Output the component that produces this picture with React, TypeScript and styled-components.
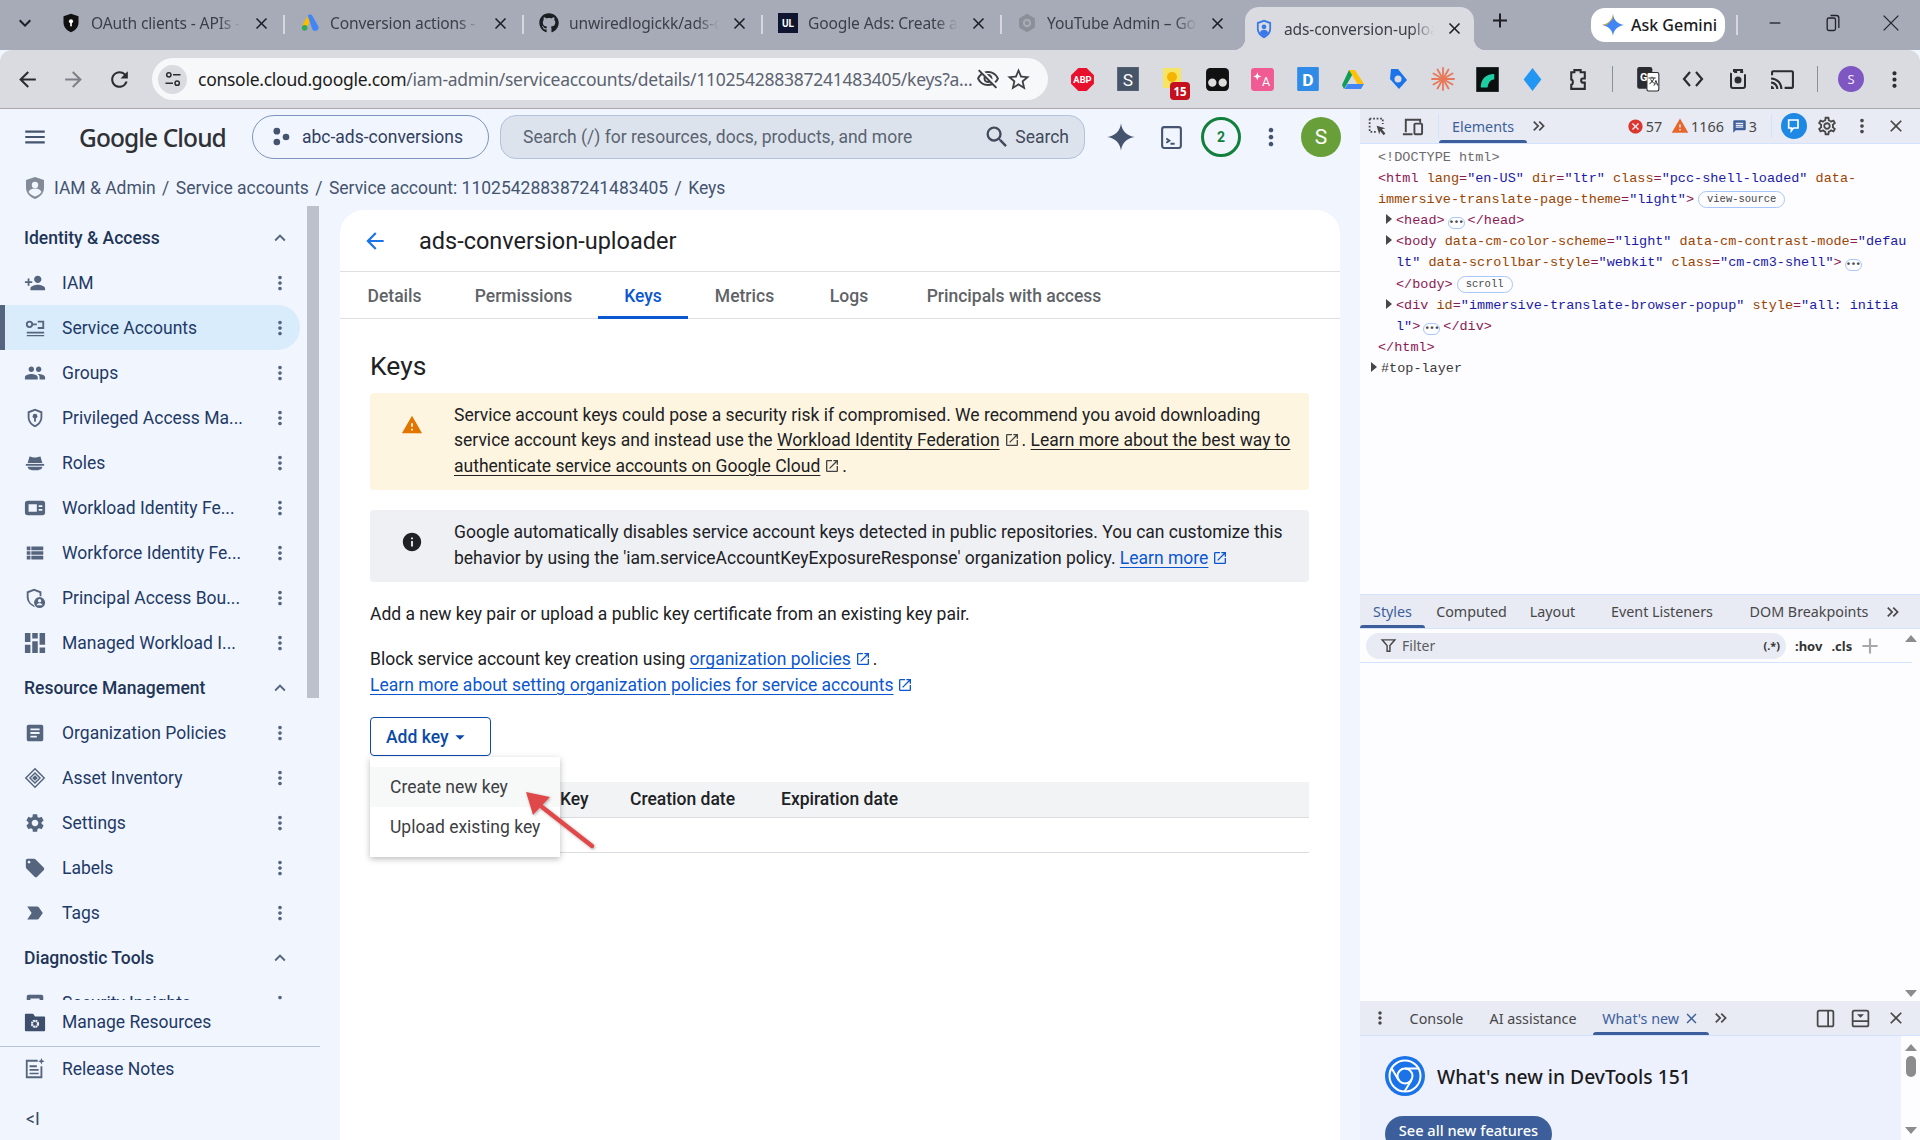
import React from "react";
import styled, { createGlobalStyle } from "styled-components";
import {
  MdPersonAdd, MdPeople, MdViewList, MdArticle, MdSettings, MdLocalOffer, MdLabelImportant,
  MdMoreVert, MdExpandLess, MdMenu, MdSearch, MdArrowBack, MdArrowForward, MdKeyboardArrowDown, MdClose, MdAdd,
  MdOutlineStarBorder, MdOutlineVisibilityOff, MdRefresh, MdInfo, MdWarning, MdOpenInNew, MdOutlineCast,
  MdArrowDropDown, MdFilterAlt, MdKeyboardDoubleArrowRight, MdOutlineSettings, MdCancel, MdMessage, MdOutlineTranslate,
} from "react-icons/md";
import { FaGithub } from "react-icons/fa";

const UI = `"Noto Sans", Roboto, sans-serif`;
const G = `Roboto, "Noto Sans", sans-serif`;
const MONO = `"Liberation Mono", monospace`;

const Global = createGlobalStyle`
  html, body { margin: 0; padding: 0; width: 1920px; height: 1140px; overflow: hidden; }
  #root { width: 1920px; height: 1140px; }
  * { box-sizing: border-box; }
`;

const Screen = styled.div`width:1920px;height:1140px;display:flex;flex-direction:column;background:#f1f5fe;overflow:hidden;`;

/* ---------- browser chrome ---------- */
const TabStrip = styled.div`height:50px;background:#a7abb8;display:flex;align-items:flex-end;flex:none;`;
const TabChevron = styled.div`width:46px;height:50px;display:flex;align-items:center;justify-content:center;padding-left:4px;color:#1d1f24;font-size:24px;padding-bottom:4px;`;
const Tab = styled.div<{ $active?: boolean; $sep?: boolean }>`
  position:relative;height:${p => (p.$active ? 43 : 50)}px;width:${p => (p.$active ? 229 : 239)}px;
  margin-left:${p => (p.$active ? 4 : 0)}px;
  display:flex;align-items:center;
  padding-left:${p => (p.$active ? 9 : 15)}px;
  padding-bottom:${p => (p.$active ? 0 : 4)}px;
  background:${p => (p.$active ? "#d9dbe0" : "transparent")};
  border-radius:${p => (p.$active ? "14px 14px 0 0" : "0")};
  ${p => p.$sep ? `&::after{content:"";position:absolute;right:0;top:15px;width:2px;height:19px;background:#d6d8dd;}` : ""}
  ${p => p.$active ? `
    &::before{content:"";position:absolute;left:-12px;bottom:0;width:12px;height:12px;background:radial-gradient(circle at 0 0,transparent 12px,#d9dbe0 12.5px);}
    &::after{content:"";position:absolute;right:-12px;bottom:0;width:12px;height:12px;background:radial-gradient(circle at 100% 0,transparent 12px,#d9dbe0 12.5px);}
  ` : ""}
`;
const Favicon = styled.span`width:20px;height:20px;flex:none;display:flex;align-items:center;justify-content:center;`;
const TabTitle = styled.span<{ $active?: boolean }>`
  width:150px;margin-left:${p => (p.$active ? 10 : 10)}px;white-space:nowrap;overflow:hidden;
  font:${UI};font-family:${UI};font-size:15.6px;letter-spacing:-.15px;color:#3c3f47;
  -webkit-mask-image:linear-gradient(90deg,#000 85%,transparent 100%);mask-image:linear-gradient(90deg,#000 85%,transparent 100%);
`;
const TabClose = styled.span`width:24px;margin-left:8px;flex:none;display:flex;justify-content:center;color:#1d1f24;font-size:19px;`;
const Plus = styled.span`margin-left:14px;width:24px;display:flex;justify-content:center;color:#1d1f24;font-size:25px;padding-bottom:9px;height:50px;align-items:center;`;
const Gemini = styled.div`
  margin-left:auto;height:34px;width:134px;border-radius:14px;background:#fff;margin-bottom:8px;
  display:flex;align-items:center;gap:6px;padding-left:10px;font-family:${UI};font-size:16px;font-weight:500;color:#1b1c20;
`;
const WinSep = styled.span`width:2px;height:20px;background:#d6d8dd;margin:0 0 15px 11px;`;
const WinBtns = styled.div`display:flex;height:50px;width:182px;align-items:center;padding-left:26px;padding-bottom:4px;gap:36px;color:#22242a;`;
const WinBtn = styled.span`width:22px;height:22px;display:flex;align-items:center;justify-content:center;`;

const Toolbar = styled.div`height:58px;background:#d9dbe0;border-radius:12px 12px 0 0;display:flex;align-items:center;flex:none;`;
const NavIcon = styled.span<{ $dim?: boolean }>`width:46px;display:flex;justify-content:center;font-size:25px;color:${p => (p.$dim ? "#7d8087" : "#2a2c31")};`;
const NavIcons = styled.div`display:flex;width:142px;padding-left:5px;`;
const AddressBar = styled.div`width:896px;height:42px;background:#f7f8fa;border-radius:21px;display:flex;align-items:center;padding:0 14px 0 6px;flex:none;margin-left:10px;`;
const SiteInfo = styled.span`width:29px;height:29px;border-radius:50%;background:#d9dbe0;flex:none;display:flex;align-items:center;justify-content:center;`;
const Url = styled.span`margin-left:11px;font-family:${UI};font-size:17.5px;letter-spacing:-.27px;color:#5c6371;white-space:nowrap;flex:1;`;
const UrlHost = styled.b`font-weight:400;color:#1b1c20;`;
const BarIcon = styled.span`width:40px;display:flex;justify-content:center;font-size:24px;color:#3e4045;`;
const Ext = styled.span<{ $w?: number }>`position:relative;width:${p => p.$w ?? 45}px;height:28px;flex:none;display:flex;align-items:center;justify-content:center;`;
const ExtRow = styled.div`display:flex;margin-left:12px;align-items:center;`;
const ExtSep = styled.span`width:1px;height:26px;background:#8a9099;margin:0 12px 0 12px;flex:none;`;
const Badge = styled.span`position:absolute;right:5px;bottom:-7px;width:20px;height:18px;border-radius:4px;background:#c5101f;color:#fff;font-family:${UI};font-size:11.5px;font-weight:700;display:flex;align-items:center;justify-content:center;`;
const Avatar = styled.span`width:26px;height:26px;border-radius:50%;background:#7e57c2;color:#f0e8ff;font-family:${UI};font-size:13px;display:flex;align-items:center;justify-content:center;`;
const ChromeEdge = styled.div`height:1px;background:#a8aaae;flex:none;`;

/* ---------- layout ---------- */
const Split = styled.div`flex:1;display:flex;min-height:0;`;
const LeftPane = styled.div`width:1360px;flex:none;display:flex;flex-direction:column;min-height:0;`;

const GNav = styled.div`height:56px;flex:none;display:flex;align-items:center;padding-left:24px;`;
const Logo = styled.span`margin-left:31px;font-family:${UI};font-size:24.5px;letter-spacing:-.9px;color:#2e3135;width:173px;font-weight:500;`;
const ProjectPill = styled.div`
  width:237px;height:44px;border:1px solid #7f94bd;border-radius:22px;display:flex;align-items:center;padding-left:18px;gap:11px;
  font-family:${G};font-size:17.5px;color:#30405f;flex:none;
`;
const SearchBox = styled.div`
  margin-left:11px;width:585px;height:44px;border:1px solid #b3c2dd;border-radius:16px;background:#dde3ec;display:flex;align-items:center;padding:0 15px 0 22px;
  font-family:${G};font-size:17.5px;color:#5a6372;flex:none;
`;
const SearchHint = styled.span`flex:1;`;
const SearchAct = styled.span`display:flex;align-items:center;gap:4px;color:#3f4a5c;`;
const HeadIcon = styled.span`width:50px;display:flex;justify-content:center;align-items:center;color:#44546f;flex:none;`;
const Credit = styled.span`width:40px;height:40px;border-radius:50%;border:3px solid #12803c;color:#12803c;font-family:${G};font-size:14px;font-weight:700;display:flex;align-items:center;justify-content:center;`;
const UserAvatar = styled.span`width:40px;height:40px;border-radius:50%;background:#689f38;color:#fff;font-family:${G};font-size:21px;display:flex;align-items:center;justify-content:center;`;

const Crumbs = styled.div`height:41px;flex:none;display:flex;align-items:center;padding:5px 0 0 25px;font-family:${G};font-size:17.5px;color:#44546f;`;
const CrumbSep = styled.span`width:12px;text-align:center;margin:0 3px;`;
const Crumb = styled.span`margin:0 1px;`;

const Body = styled.div`flex:1;display:flex;min-height:0;`;
const Sidebar = styled.aside`width:340px;flex:none;display:flex;flex-direction:column;`;
const NavArea = styled.div`height:794px;flex:none;display:flex;overflow:hidden;`;
const NavList = styled.div`width:300px;flex:none;padding-top:9px;`;
const Thumb = styled.div`width:12px;height:492px;margin-left:7px;background:#bcc1cc;flex:none;`;
const Section = styled.div`height:45px;display:flex;align-items:center;padding-left:24px;font-family:${G};font-size:17.5px;font-weight:500;color:#1e3557;`;
const SectionName = styled.span`flex:1;`;
const Row = styled.div<{ $active?: boolean }>`
  height:45px;display:flex;align-items:center;padding-left:24px;font-family:${G};font-size:17.5px;color:#1e3a66;white-space:nowrap;
  background:${p => (p.$active ? "#d9ecfc" : "transparent")};
  border-radius:${p => (p.$active ? "0 22px 22px 0" : "0")};
  border-left:${p => (p.$active ? "5px solid #56657e" : "0")};
  ${p => p.$active ? "padding-left:19px;" : ""}
`;
const RowIcon = styled.span`width:22px;height:22px;flex:none;display:flex;align-items:center;justify-content:center;color:#56657e;font-size:22px;`;
const RowLabel = styled.span`margin-left:16px;flex:1;`;
const RowEnd = styled.span`width:24px;margin-right:8px;display:flex;justify-content:center;color:#56657e;font-size:22px;`;
const SideFoot = styled.div`flex:1;display:flex;flex-direction:column;`;
const FootRow = styled(Row)`height:44px;`;
const FootDivider = styled.div`width:320px;height:1px;background:#b7c3dc;margin:2px 0 0;`;
const Collapse = styled.div`margin-top:6px;padding-left:26px;height:44px;display:flex;align-items:center;color:#3b4a63;font-family:${G};font-size:17.5px;`;

const Card = styled.main`width:1000px;margin-top:4px;background:#fff;border-radius:24px 24px 0 0;flex:none;display:flex;flex-direction:column;`;
const CardHead = styled.div`height:62px;border-bottom:1px solid #e0e0e0;flex:none;display:flex;align-items:center;padding-left:22px;`;
const CardTitle = styled.h1`margin:0 0 0 31px;font-family:${G};font-weight:400;font-size:23.5px;color:#202124;`;
const Tabs = styled.nav`height:47px;border-bottom:1px solid #e0e0e0;flex:none;display:flex;padding-left:0;`;
const TabLink = styled.span<{ $on?: boolean; $w: number }>`
  height:47px;width:${p => p.$w}px;display:flex;align-items:center;justify-content:center;font-family:${G};font-size:17.5px;font-weight:500;
  color:${p => (p.$on ? "#0b57d0" : "#5f6368")};
  border-bottom:${p => (p.$on ? "3px solid #0b57d0" : "0")};
  padding-top:${p => (p.$on ? 3 : 0)}px;
`;
const Content = styled.div`padding:30px 31px 0 30px;font-family:${G};font-size:17.5px;color:#202124;line-height:25.4px;`;
const H2 = styled.h2`margin:0 0 10px;font-family:${G};font-weight:400;font-size:26.5px;line-height:34px;color:#202124;`;
const Notice = styled.div<{ $warn?: boolean }>`
  display:flex;background:${p => (p.$warn ? "#fef5e0" : "#eef0f4")};border-radius:4px;padding:10px 0 11px;
  margin-bottom:20px;
`;
const NoticeIcon = styled.span`width:84px;flex:none;display:flex;justify-content:center;padding-top:11px;font-size:22px;`;
const NoticeText = styled.div`flex:1;white-space:nowrap;`;
const Under = styled.a<{ $blue?: boolean }>`color:${p => (p.$blue ? "#0b57d0" : "#202124")};text-decoration:underline;text-underline-offset:3px;`;
const Ext2 = styled.span<{ $blue?: boolean }>`display:inline-flex;vertical-align:-2px;margin:0 2px 0 4px;font-size:16px;color:${p => (p.$blue ? "#0b57d0" : "#444")};`;
const Para = styled.p`margin:0 0 20px;white-space:nowrap;`;
const ActionWrap = styled.div`position:relative;height:39px;margin-top:-1px;`;
const AddKey = styled.button`
  width:121px;height:39px;background:#fff;border:1px solid #0b4aa8;border-radius:4px;font-family:${G};font-size:17.5px;font-weight:500;color:#0b4aa8;
  display:flex;align-items:center;padding:0 0 0 15px;
`;
const Menu = styled.div`position:absolute;left:0;top:40px;width:190px;height:100px;background:#fff;box-shadow:0 2px 6px rgba(60,64,67,.35);padding-top:10px;z-index:2;`;
const MenuItem = styled.div<{ $hi?: boolean }>`height:40px;padding-left:20px;display:flex;align-items:center;background:${p => (p.$hi ? "#f7f8f8" : "#fff")};color:#3c4043;`;
const Arrow = styled.svg`position:absolute;left:150px;top:70px;z-index:3;`;
const Table = styled.div`margin-top:26px;`;
const THead = styled.div`height:36px;background:#f1f3f4;border-bottom:1px solid #dadce0;display:flex;align-items:center;font-weight:500;padding-left:190px;color:#202124;`;
const Th = styled.span<{ $w: number }>`width:${p => p.$w}px;`;
const TRow = styled.div`height:35px;border-bottom:1px solid #dadce0;`;

/* ---------- devtools ---------- */
const Dev = styled.aside`width:560px;flex:none;display:flex;flex-direction:column;background:#fdfcff;font-family:${UI};min-height:0;`;
const DevBar = styled.div<{ $h?: number }>`height:${p => p.$h ?? 35}px;background:#e8eaf4;flex:none;display:flex;align-items:center;border-bottom:1px solid #d3e3fd;color:#474747;font-size:14.3px;`;
const DevTab = styled.span<{ $on?: boolean; $w: number }>`
  width:${p => p.$w}px;height:100%;display:flex;align-items:center;justify-content:center;flex:none;position:relative;
  color:${p => (p.$on ? "#3c5f9b" : "#474747")};
  ${p => p.$on ? `&::after{content:"";position:absolute;left:0;right:0;bottom:0;height:3px;background:#3c5f9b;border-radius:3px 3px 0 0;}` : ""}
`;
const DevIcon = styled.span<{ $w?: number }>`width:${p => p.$w ?? 35}px;flex:none;display:flex;align-items:center;justify-content:center;color:#474747;`;
const DevDivider = styled.span`width:1px;height:24px;background:#d3e3fd;flex:none;`;
const Count = styled.span`display:flex;align-items:center;gap:2px;flex:none;font-size:14.3px;`;
const Elements = styled.div`height:451px;flex:none;padding-top:3px;font-family:${MONO};font-size:13.5px;line-height:21.1px;border-bottom:1px solid #d3e3fd;white-space:nowrap;color:#3a3a3a;`;
const Line = styled.div<{ $x: number }>`padding-left:${p => p.$x}px;height:21.1px;position:relative;`;
const Tri = styled.i`position:absolute;display:block;width:0;height:0;border-left:6px solid #474747;border-top:5px solid transparent;border-bottom:5px solid transparent;margin:4px 0 0 -10px;`;
const T = styled.span`color:#8b1a53;`;
const A = styled.span`color:#994500;`;
const V = styled.span`color:#1a1aa6;`;
const Gr = styled.span`color:#6b6b6b;`;
const Pill = styled.span`display:inline-block;border:1px solid #a8c7fa;border-radius:9px;font-size:10.5px;line-height:15px;height:17px;padding:0 8px;margin:0 0 0 4px;color:#474747;vertical-align:1px;`;
const Dots = styled.span`display:inline-flex;align-items:center;justify-content:center;width:17px;height:12px;border:1px solid #a8c7fa;border-radius:6px;margin:0 3px;font-size:9px;letter-spacing:-.5px;color:#474747;font-weight:700;line-height:6px;vertical-align:-1px;`;
const FilterRow = styled.div`height:34px;flex:none;display:flex;align-items:center;border-bottom:1px solid #d3e3fd;width:552px;padding-left:6px;font-size:14px;color:#474747;`;
const FilterBox = styled.div`width:420px;height:26px;border-radius:13px;background:#e8eaf4;display:flex;align-items:center;padding:0 6px 0 14px;gap:5px;`;
const FilterText = styled.span`flex:1;color:#5c5c5c;`;
const Hov = styled.span`font-weight:700;font-size:13px;margin-left:9px;font-family:${UI};color:#333;`;
const StylesPane = styled.div`height:338px;flex:none;position:relative;`;
const Scroller = styled.div`position:absolute;right:0;top:0;bottom:0;width:19px;display:flex;flex-direction:column;align-items:center;justify-content:space-between;color:#8c8c8c;padding:0 0 4px;`;
const UpTri = styled.i`display:block;width:0;height:0;border-left:6px solid transparent;border-right:6px solid transparent;border-bottom:7px solid #8c8c8c;`;
const DownTri = styled.i`display:block;width:0;height:0;border-left:6px solid transparent;border-right:6px solid transparent;border-top:7px solid #8c8c8c;`;
const DrawerBody = styled.div`flex:1;background:#edf0fd;position:relative;padding:20px 0 0 25px;overflow:hidden;`;
const NewsHead = styled.div`display:flex;align-items:center;gap:12px;font-size:19.3px;font-weight:500;color:#1b1c20;height:40px;`;
const SeeAll = styled.div`margin-top:20px;width:167px;height:36px;border-radius:18px;background:#3c5f9b;color:#fff;font-size:14.6px;font-weight:500;display:flex;justify-content:center;padding-top:4px;`;
const DrawerScroll = styled.div`position:absolute;right:0;top:0;bottom:0;width:19px;background:#fdfcff;display:flex;flex-direction:column;align-items:center;padding:8px 0 0;`;
const DrawerThumb = styled.i`display:block;width:10px;height:21px;border-radius:5px;background:#8c8c8c;margin-top:5px;`;
const Spacer = styled.span`flex:1;`;

/* ---------- drawn icons ---------- */
const Svg: React.FC<{ s?: number; v?: string; children: React.ReactNode; style?: React.CSSProperties }> = ({ s = 22, v = "0 0 24 24", children, style }) => (
  <svg width={s} height={s} viewBox={v} style={style}>{children}</svg>
);
const Star4 = "M12 1C12.6 7 17 11.4 23 12C17 12.6 12.6 17 12 23C11.4 17 7 12.6 1 12C7 11.4 11.4 7 12 1Z";

const ShieldFav = () => <Svg s={20}><path fill="#111" d="M12 1l9 3v7c0 6-4 10-9 12-5-2-9-6-9-12V4z" /><circle cx="12" cy="10" r="2.5" fill="#fff" /><rect x="11" y="11" width="2" height="5" fill="#fff" /></Svg>;
const AdsFav = () => <Svg s={22}><path fill="#fbbc04" d="M9 4l5 2.8-6 10.4L3 14.4z" /><path fill="#4285f4" d="M9.2 3.4c1.4-2.4 4.4-2 5.6 0l7 12.2c1.2 2.2.4 4.4-1.6 5.4-2 1-4.2.4-5.4-1.6z" /><circle cx="5.6" cy="17.8" r="3.4" fill="#34a853" /></Svg>;
const UlFav = () => <Svg s={20}><rect width="24" height="24" fill="#0f1430" /><text x="12" y="16.5" fontSize="12" fontWeight="700" fontFamily="Roboto, sans-serif" fill="#fff" textAnchor="middle">UL</text></Svg>;
const HexFav = () => <Svg s={20}><path fill="#8b8f98" d="M12 1l9.5 5.5v11L12 23l-9.5-5.5v-11z" /><circle cx="12" cy="12" r="5" fill="#a7abb8" /><circle cx="12" cy="12" r="2.4" fill="#8b8f98" /></Svg>;
const ActiveFav = () => <Svg s={22}><path fill="#3b78e7" d="M12 1l8.5 3v7.5c0 5.5-3.6 9.5-8.5 11.5-4.9-2-8.5-6-8.5-11.5V4z" /><path fill="#d9dbe0" d="M12 3.4l6.4 2.3v5.8c0 4.3-2.7 7.3-6.4 9-3.7-1.7-6.4-4.7-6.4-9V5.7z" /><circle cx="12" cy="9.4" r="2.8" fill="#3b78e7" /><path fill="#3b78e7" d="M7 17c.6-2.8 2.6-4 5-4s4.4 1.2 5 4c-1.4 1.6-3 2.8-5 3.6-2-.8-3.6-2-5-3.6z" /></Svg>;

const GeminiStar = ({ s = 22 }: { s?: number }) => (
  <Svg s={s}>
    <defs><linearGradient id="gem" x1="0" y1="0" x2="1" y2="1"><stop offset="0" stopColor="#ea4335" /><stop offset=".35" stopColor="#4285f4" /><stop offset=".65" stopColor="#4285f4" /><stop offset="1" stopColor="#34a853" /></linearGradient></defs>
    <path d={Star4} fill="url(#gem)" />
    <path d="M12 1C11.4 7 7 11.4 1 12L6 12 12 6z" fill="#f4b400" opacity=".75" />
  </Svg>
);
const Burst = () => <Svg s={24}><g stroke="#e8785a" strokeWidth="1.8" strokeLinecap="round">{[0, 30, 60, 90, 120, 150, 180, 210, 240, 270, 300, 330].map(a => <line key={a} x1="12" y1="12" x2={12 + 11 * Math.cos(a * Math.PI / 180)} y2={12 + 11 * Math.sin(a * Math.PI / 180)} />)}</g></Svg>;

const svcIcon = <Svg><circle cx="6" cy="8" r="3" fill="none" stroke="currentColor" strokeWidth="2" /><path fill="currentColor" d="M9 7h5v2H9zM15 4h7v9h-7v-2h5V6h-5zM3 16h19v2H3zM3 19.5h19v1.5H3z" /></Svg>;
const privIcon = <Svg><path fill="currentColor" fillRule="evenodd" d="M12 2l8 3v6c0 5-3.4 9.3-8 11-4.6-1.7-8-6-8-11V5zm0 2.2L6 6.5V11c0 4 2.5 7.4 6 8.8 3.5-1.4 6-4.8 6-8.8V6.500z" /><circle cx="12" cy="10" r="2.6" fill="currentColor" /><rect x="11" y="11" width="2" height="5" fill="currentColor" /></Svg>;
const rolesIcon = <Svg><path fill="currentColor" d="M6 5c2 0 2 1 6 1s4-1 6-1l2 7H4z" /><path fill="currentColor" d="M2 13h20v2H2z" /><path fill="currentColor" d="M4 16h16c0 2.500-3 4-8 4s-8-1.500-8-4z" /></Svg>;
const wifIcon = <Svg><path fill="currentColor" fillRule="evenodd" d="M4 4h16a3 3 0 013 3v10a3 3 0 01-3 3H4a3 3 0 01-3-3V7a3 3 0 013-3zm1 4v8h9V8zm11 1v2h4V9zm0 4v2h4v-2z" /></Svg>;
const pabIcon = <Svg><path fill="currentColor" fillRule="evenodd" d="M11 2l8 3v5h-2V6.500l-6-2.300-6 2.300V11c0 4 2.200 7.300 5.500 8.700L12 22c-5-1.500-9-6-9-11V5z" /><circle cx="17" cy="17" r="6" fill="currentColor" /><circle cx="17" cy="15" r="1.800" fill="#f1f5fe" /><path fill="#f1f5fe" d="M13.800 20c.5-1.600 1.700-2.200 3.200-2.200s2.700.6 3.200 2.200z" /></Svg>;
const mwiIcon = <Svg><path fill="currentColor" d="M1 1h6v10H1zM1 14h6v9H1zM9 1h6v6H9zM9 10h6v13H9zM17 1h6v13h-6zM17 17h6v6h-6z" /></Svg>;
const assetIcon = <Svg><g fill="none" stroke="currentColor" strokeWidth="1.600"><path d="M12 2l10 10-10 10L2 12z" /><path d="M12 6.500l5.500 5.500-5.500 5.500L6.500 12z" /><path d="M12 10l2 2-2 2-2-2z" fill="currentColor" /></g></Svg>;
const folderIcon = <Svg s={24}><path fill="#3e4f6b" d="M2 3h8l2 3h10a1 1 0 011 1v14a1 1 0 01-1 1H2a1 1 0 01-1-1V4a1 1 0 011-1z" /><circle cx="12" cy="14" r="3.300" fill="none" stroke="#f1f5fe" strokeWidth="2.400" strokeDasharray="2 .6" /></Svg>;
const notesIcon = <Svg><path fill="none" stroke="currentColor" strokeWidth="2" d="M15 3H3v18h16V9" /><path fill="currentColor" d="M6 8h8v2H6zM6 12h10v2H6zM6 16h10v1.800H6zM19 0l1 2.500L22.500 3.500 20 4.500 19 7l-1-2.500L15.500 3.500 18 2.500z" /></Svg>;

const ExtOut = ({ blue }: { blue?: boolean }) => <Ext2 $blue={blue}><MdOpenInNew /></Ext2>;

const tabsData = [
  { title: "OAuth clients - APIs - APIs & Services", icon: <ShieldFav /> },
  { title: "Conversion actions - Dashboard", icon: <AdsFav /> },
  { title: "unwiredlogickk/ads-conversion", icon: <FaGithub size={20} color="#1b1f24" /> },
  { title: "Google Ads: Create a Service", icon: <UlFav /> },
  { title: "YouTube Admin – Google Cloud", icon: <HexFav /> },
];

const navTop = [
  { l: "IAM", i: <MdPersonAdd /> },
  { l: "Service Accounts", i: svcIcon, on: true },
  { l: "Groups", i: <MdPeople /> },
  { l: "Privileged Access Ma...", i: privIcon },
  { l: "Roles", i: rolesIcon },
  { l: "Workload Identity Fe...", i: wifIcon },
  { l: "Workforce Identity Fe...", i: <MdViewList /> },
  { l: "Principal Access Bou...", i: pabIcon },
  { l: "Managed Workload I...", i: mwiIcon },
];
const navRes = [
  { l: "Organization Policies", i: <MdArticle /> },
  { l: "Asset Inventory", i: assetIcon },
  { l: "Settings", i: <MdSettings /> },
  { l: "Labels", i: <MdLocalOffer /> },
  { l: "Tags", i: <MdLabelImportant /> },
];

const NavRow: React.FC<{ l: string; i: React.ReactNode; on?: boolean }> = ({ l, i, on }) => (
  <Row $active={on}>
    <RowIcon>{i}</RowIcon>
    <RowLabel>{l}</RowLabel>
    <RowEnd><MdMoreVert /></RowEnd>
  </Row>
);
const Sec: React.FC<{ t: string }> = ({ t }) => (
  <Section><SectionName>{t}</SectionName><RowEnd><MdExpandLess /></RowEnd></Section>
);

export default function App() {
  return (
    <Screen>
      <Global />
      <TabStrip>
        <TabChevron><MdKeyboardArrowDown /></TabChevron>
        {tabsData.map((t, i) => (
          <Tab key={t.title} $sep={i < 4}>
            <Favicon>{t.icon}</Favicon>
            <TabTitle>{t.title}</TabTitle>
            <TabClose><MdClose /></TabClose>
          </Tab>
        ))}
        <Tab $active>
          <Favicon><ActiveFav /></Favicon>
          <TabTitle $active>ads-conversion-uploader</TabTitle>
          <TabClose><MdClose /></TabClose>
        </Tab>
        <Plus><MdAdd /></Plus>
        <Gemini><GeminiStar s={24} />Ask Gemini</Gemini>
        <WinSep />
        <WinBtns>
          <WinBtn><Svg s={16}><rect x="4" y="11" width="16" height="2" fill="#22242a" /></Svg></WinBtn>
          <WinBtn><Svg s={20}><rect x="5" y="6" width="10" height="15" rx="2" fill="none" stroke="#22242a" strokeWidth="1.600" /><path d="M9 3h7a3 3 0 013 3v12" fill="none" stroke="#22242a" strokeWidth="1.600" /></Svg></WinBtn>
          <WinBtn><Svg s={22}><path d="M4 4l16 16M20 4L4 20" stroke="#22242a" strokeWidth="1.400" /></Svg></WinBtn>
        </WinBtns>
      </TabStrip>
      <Toolbar>
        <NavIcons>
          <NavIcon><MdArrowBack /></NavIcon>
          <NavIcon $dim><MdArrowForward /></NavIcon>
          <NavIcon><MdRefresh /></NavIcon>
        </NavIcons>
        <AddressBar>
          <SiteInfo><Svg s={20}><circle cx="7" cy="7" r="2.600" fill="none" stroke="#2a2c31" strokeWidth="1.800" /><path d="M12 7h9M3 17h9" stroke="#2a2c31" strokeWidth="1.800" /><circle cx="17" cy="17" r="2.600" fill="none" stroke="#2a2c31" strokeWidth="1.800" /></Svg></SiteInfo>
          <Url><UrlHost>console.cloud.google.com</UrlHost>/iam-admin/serviceaccounts/details/110254288387241483405/keys?a...</Url>
          <BarIcon><MdOutlineVisibilityOff /></BarIcon>
          <BarIcon style={{ fontSize: 27 }}><MdOutlineStarBorder /></BarIcon>
        </AddressBar>
        <ExtRow>
          <Ext><Svg s={25}><path fill="#e8112d" d="M8 1h8l7 7v8l-7 7H8l-7-7V8z" /><text x="12" y="15.500" fontSize="9" fontWeight="700" fontFamily="Roboto, sans-serif" fill="#fff" textAnchor="middle">ABP</text></Svg></Ext>
          <Ext><Svg s={26}><rect x="2" y="1" width="20" height="22" fill="#475569" /><text x="12" y="18" fontSize="16" fontFamily="Roboto, sans-serif" fill="#fff" textAnchor="middle">S</text></Svg></Ext>
          <Ext><Svg s={24}><rect x="2" y="1" width="18" height="20" fill="#f5e562" /><circle cx="11" cy="10" r="5" fill="#f4b400" /></Svg><Badge>15</Badge></Ext>
          <Ext><Svg s={25}><rect x="1" y="1" width="22" height="22" rx="4" fill="#111" /><circle cx="7" cy="15" r="4" fill="#ddd" /><circle cx="17" cy="15" r="4" fill="#ddd" /></Svg></Ext>
          <Ext><Svg s={25}><rect x="1" y="1" width="22" height="22" rx="3" fill="#ef5b92" /><text x="15.500" y="18" fontSize="12" fontFamily="Roboto, sans-serif" fill="#fff" textAnchor="middle">A</text><path d="M7 5l1 3 3 1-3 1-1 3-1-3-3-1 3-1z" fill="#fff" /></Svg></Ext>
          <Ext><Svg s={26}><rect x="2" y="1" width="20" height="22" rx="1" fill="#2f8be6" /><text x="12" y="18" fontSize="16" fontWeight="700" fontFamily="Roboto, sans-serif" fill="#fff" textAnchor="middle">D</text></Svg></Ext>
          <Ext><Svg s={24}><path fill="#0f9d58" d="M8 3h6L6 17l-3 5-2-4z" /><path fill="#ffc107" d="M14 3h-6l8.500 14h6.500z" /><path fill="#4285f4" d="M6.500 17H23l-3 5H3.500z" /></Svg></Ext>
          <Ext><Svg s={24}><path fill="#1a73e8" d="M5 2h7l9 11-8 9-9-10z" /><circle cx="12" cy="12" r="3.500" fill="#d9dbe0" /></Svg></Ext>
          <Ext><Burst /></Ext>
          <Ext><Svg s={27}><rect x="2" y="1" width="20" height="22" fill="#0a0f10" /><path d="M6 19c0-7 4-12 12-12v5c-3 0-5 2-6 7z" fill="#1ecfa4" /></Svg></Ext>
          <Ext><Svg s={25}><path d="M12 1l8.500 11L12 23 3.500 12z" fill="#2196f3" /></Svg></Ext>
          <Ext><Svg s={25}><path fill="none" stroke="#2a2c31" strokeWidth="2" d="M9 5V3h6v2h4v6h-2c-2 0-2 4 0 4h2v6H6v-4c2 0 2-5 0-5V5z" /></Svg></Ext>
          <ExtSep />
          <Ext><Svg s={26}><rect x="2" y="1" width="14" height="20" rx="2" fill="#2a2c31" /><rect x="11" y="6" width="11" height="17" rx="1.500" fill="#fff" stroke="#2a2c31" /><text x="8" y="14" fontSize="10" fontWeight="700" fontFamily="Roboto, sans-serif" fill="#fff" textAnchor="middle">G</text><MdOutlineTranslate x="12" y="9" size="10" color="#2a2c31" /></Svg></Ext>
          <Ext><Svg s={24}><path d="M9 5l-6 7 6 7M15 5l6 7-6 7" fill="none" stroke="#2a2c31" strokeWidth="2.200" /></Svg></Ext>
          <Ext><Svg s={24}><path d="M8 5V3h8v2M5 9v10a2 2 0 002 2h10a2 2 0 002-2V9" fill="none" stroke="#2a2c31" strokeWidth="2" /><path d="M5 9V7a2 2 0 012-2h10a2 2 0 012 2v2" fill="none" stroke="#2a2c31" strokeWidth="2" strokeDasharray="3 3" /><circle cx="12" cy="13" r="3.500" fill="#2a2c31" /></Svg></Ext>
          <Ext><MdOutlineCast size={25} color="#2a2c31" /></Ext>
          <ExtSep />
          <Ext $w={42}><Avatar>S</Avatar></Ext>
          <Ext><MdMoreVert size={25} color="#2a2c31" /></Ext>
        </ExtRow>
      </Toolbar>
      <ChromeEdge />
      <Split>
        <LeftPane>
          <GNav>
            <MdMenu size={26} color="#44546f" style={{ marginLeft: -2 }} />
            <Logo>Google Cloud</Logo>
            <ProjectPill>
              <Svg s={20}><circle cx="7" cy="5" r="4" fill="#44546f" /><circle cx="7" cy="18" r="4" fill="#44546f" /><circle cx="18" cy="12" r="4" fill="#44546f" /></Svg>
              abc-ads-conversions
            </ProjectPill>
            <SearchBox>
              <SearchHint>Search (/) for resources, docs, products, and more</SearchHint>
              <SearchAct><MdSearch size={28} />Search</SearchAct>
            </SearchBox>
            <HeadIcon style={{ marginLeft: 11 }}><Svg s={30}><path d={Star4} fill="#44546f" /></Svg></HeadIcon>
            <HeadIcon><Svg s={25}><rect x="3" y="2" width="18" height="20" rx="2" fill="none" stroke="#44546f" strokeWidth="2" /><path d="M7 13l3 2-3 2M11 18h4" fill="none" stroke="#44546f" strokeWidth="1.800" /></Svg></HeadIcon>
            <HeadIcon><Credit>2</Credit></HeadIcon>
            <HeadIcon><MdMoreVert size={28} /></HeadIcon>
            <HeadIcon><UserAvatar>S</UserAvatar></HeadIcon>
          </GNav>
          <Crumbs>
            <Svg s={24} style={{ marginRight: 6, marginLeft: -2 }}><path fill="#848b98" d="M12 1l9 3v8c0 5-4 9-9 11-5-2-9-6-9-11V4z" /><circle cx="12" cy="9" r="3.200" fill="#f1f5fe" /><path fill="#f1f5fe" d="M5.500 16c1-2.600 3.500-3.600 6.500-3.600s5.500 1 6.500 3.600c-1.500 2-3.800 3.600-6.500 4.600-2.700-1-5-2.600-6.500-4.600z" /></Svg>
            <Crumb>IAM &amp; Admin</Crumb><CrumbSep>/</CrumbSep>
            <Crumb>Service accounts</Crumb><CrumbSep>/</CrumbSep>
            <Crumb>Service account: 110254288387241483405</Crumb><CrumbSep>/</CrumbSep>
            <Crumb>Keys</Crumb>
          </Crumbs>
          <Body>
            <Sidebar>
              <NavArea>
                <NavList>
                  <Sec t="Identity & Access" />
                  {navTop.map(n => <NavRow key={n.l} {...n} />)}
                  <Sec t="Resource Management" />
                  {navRes.map(n => <NavRow key={n.l} {...n} />)}
                  <Sec t="Diagnostic Tools" />
                  <NavRow l="Security Insights" i={<MdArticle />} />
                </NavList>
                <Thumb />
              </NavArea>
              <SideFoot>
                <FootRow><RowIcon>{folderIcon}</RowIcon><RowLabel>Manage Resources</RowLabel></FootRow>
                <FootDivider />
                <FootRow><RowIcon>{notesIcon}</RowIcon><RowLabel>Release Notes</RowLabel></FootRow>
                <Collapse>&lt;I</Collapse>
              </SideFoot>
            </Sidebar>
            <Card>
              <CardHead>
                <MdArrowBack size={26} color="#1a73e8" />
                <CardTitle>ads-conversion-uploader</CardTitle>
              </CardHead>
              <Tabs>
                <TabLink $w={109}>Details</TabLink>
                <TabLink $w={149}>Permissions</TabLink>
                <TabLink $w={90} $on>Keys</TabLink>
                <TabLink $w={113}>Metrics</TabLink>
                <TabLink $w={96}>Logs</TabLink>
                <TabLink $w={234}>Principals with access</TabLink>
              </Tabs>
              <Content>
                <H2>Keys</H2>
                <Notice $warn>
                  <NoticeIcon><MdWarning color="#e37400" /></NoticeIcon>
                  <NoticeText>
                    Service account keys could pose a security risk if compromised. We recommend you avoid downloading<br />
                    service account keys and instead use the <Under>Workload Identity Federation</Under><ExtOut />. <Under>Learn more about the best way to</Under><br />
                    <Under>authenticate service accounts on Google Cloud</Under><ExtOut />.
                  </NoticeText>
                </Notice>
                <Notice>
                  <NoticeIcon><MdInfo color="#202124" /></NoticeIcon>
                  <NoticeText>
                    Google automatically disables service account keys detected in public repositories. You can customize this<br />
                    behavior by using the 'iam.serviceAccountKeyExposureResponse' organization policy. <Under $blue>Learn more</Under><ExtOut blue />
                  </NoticeText>
                </Notice>
                <Para>Add a new key pair or upload a public key certificate from an existing key pair.</Para>
                <Para>
                  Block service account key creation using <Under $blue>organization policies</Under><ExtOut blue />.<br />
                  <Under $blue>Learn more about setting organization policies for service accounts</Under><ExtOut blue />
                </Para>
                <ActionWrap>
                  <AddKey>Add key<MdArrowDropDown size={22} style={{ marginLeft: 1 }} /></AddKey>
                  <Menu>
                    <MenuItem $hi>Create new key</MenuItem>
                    <MenuItem>Upload existing key</MenuItem>
                  </Menu>
                  <Arrow width="80" height="70" viewBox="0 0 80 70">
                    <defs><filter id="sh"><feDropShadow dx="1" dy="1" stdDeviation="1.500" floodOpacity=".3" /></filter></defs>
                    <g filter="url(#sh)"><path d="M22 20L72 59" stroke="#e04a4a" strokeWidth="4.500" strokeLinecap="round" /><path d="M6 5L30 10L13 28z" fill="#e04a4a" /></g>
                  </Arrow>
                </ActionWrap>
                <Table>
                  <THead>
                    <Th $w={70}>Key</Th><Th $w={151}>Creation date</Th><Th $w={130}>Expiration date</Th>
                  </THead>
                  <TRow />
                </Table>
              </Content>
            </Card>
          </Body>
        </LeftPane>
        <Dev>
          <DevBar>
            <DevIcon><Svg s={21}><path d="M3 3h15v6M3 3v15h7" fill="none" stroke="#474747" strokeWidth="2" strokeDasharray="2 2" /><path d="M11 11l10 3-4 1 4 5-2 2-4-5-1 4z" fill="#474747" /></Svg></DevIcon>
            <DevIcon><Svg s={23}><path d="M2 20h10M5 18V5h15v3" fill="none" stroke="#474747" strokeWidth="2" /><rect x="14" y="9" width="8" height="11" rx="1" fill="none" stroke="#474747" strokeWidth="2" /></Svg></DevIcon>
            <DevIcon $w={8} />
            <DevDivider />
            <DevTab $w={88} $on>Elements</DevTab>
            <DevIcon $w={24}><MdKeyboardDoubleArrowRight size={20} /></DevIcon>
            <Spacer />
            <Count><MdCancel size={17} color="#dc362e" />57</Count>
            <Count style={{ marginLeft: 9 }}><MdWarning size={18} color="#e8662c" />1166</Count>
            <Count style={{ marginLeft: 8 }}><MdMessage size={15} color="#3c5f9b" />3</Count>
            <DevIcon $w={14} />
            <DevDivider />
            <DevIcon $w={44}><span style={{ width: 26, height: 26, borderRadius: 13, background: "#1e88e5", display: "flex", alignItems: "center", justifyContent: "center" }}><Svg s={16}><path d="M4 3h14v12h-7l-3 4v-4H4z" fill="none" stroke="#fff" strokeWidth="2.500" /></Svg></span></DevIcon>
            <DevIcon $w={22}><MdOutlineSettings size={22} /></DevIcon>
            <DevIcon $w={48}><MdMoreVert size={22} /></DevIcon>
            <DevIcon $w={20}><MdClose size={20} /></DevIcon>
            <DevIcon $w={14} />
          </DevBar>
          <Elements>
            <Line $x={18}><Gr>&lt;!DOCTYPE html&gt;</Gr></Line>
            <Line $x={18}><T>&lt;html</T> <A>lang</A><T>=</T><V>"en-US"</V> <A>dir</A><T>=</T><V>"ltr"</V> <A>class</A><T>=</T><V>"pcc-shell-loaded"</V> <A>data-</A></Line>
            <Line $x={18}><A>immersive-translate-page-theme</A><T>=</T><V>"light"</V><T>&gt;</T><Pill>view-source</Pill></Line>
            <Line $x={36}><Tri /><T>&lt;head&gt;</T><Dots>•••</Dots><T>&lt;/head&gt;</T></Line>
            <Line $x={36}><Tri /><T>&lt;body</T> <A>data-cm-color-scheme</A><T>=</T><V>"light"</V> <A>data-cm-contrast-mode</A><T>=</T><V>"defau</V></Line>
            <Line $x={36}><V>lt"</V> <A>data-scrollbar-style</A><T>=</T><V>"webkit"</V> <A>class</A><T>=</T><V>"cm-cm3-shell"</V><T>&gt;</T><Dots>•••</Dots></Line>
            <Line $x={36}><T>&lt;/body&gt;</T><Pill>scroll</Pill></Line>
            <Line $x={36}><Tri /><T>&lt;div</T> <A>id</A><T>=</T><V>"immersive-translate-browser-popup"</V> <A>style</A><T>=</T><V>"all: initia</V></Line>
            <Line $x={36}><V>l"</V><T>&gt;</T><Dots>•••</Dots><T>&lt;/div&gt;</T></Line>
            <Line $x={18}><T>&lt;/html&gt;</T></Line>
            <Line $x={21}><Tri />#top-layer</Line>
          </Elements>
          <DevBar $h={34}>
            <DevTab $w={65} $on>Styles</DevTab>
            <DevTab $w={93}>Computed</DevTab>
            <DevTab $w={69}>Layout</DevTab>
            <DevTab $w={150}>Event Listeners</DevTab>
            <DevTab $w={144}>DOM Breakpoints</DevTab>
            <DevIcon $w={24}><MdKeyboardDoubleArrowRight size={20} /></DevIcon>
          </DevBar>
          <FilterRow>
            <FilterBox>
              <Svg s={17}><path d="M3 4h18l-7 8v8h-4v-8z" fill="none" stroke="#474747" strokeWidth="2" /></Svg>
              <FilterText>Filter</FilterText>
              <Hov style={{ fontSize: 11 }}>(.*)</Hov>
            </FilterBox>
            <Hov>:hov</Hov>
            <Hov>.cls</Hov>
            <MdAdd size={26} color="#a8a8a8" style={{ marginLeft: 5 }} />
          </FilterRow>
          <StylesPane>
            <Scroller style={{ top: -28 }}><UpTri /><DownTri /></Scroller>
          </StylesPane>
          <DevBar>
            <DevIcon $w={18} />
            <MdMoreVert size={20} style={{ marginLeft: -8, marginRight: 0 }} />
            <DevIcon $w={10} />
            <DevTab $w={73}>Console</DevTab>
            <DevTab $w={120}>AI assistance</DevTab>
            <DevTab $w={116} $on>What's new&nbsp;<MdClose size={17} /></DevTab>
            <DevIcon $w={24}><MdKeyboardDoubleArrowRight size={20} /></DevIcon>
            <Spacer />
            <DevIcon><Svg s={21}><rect x="3" y="3" width="18" height="18" rx="2" fill="none" stroke="#474747" strokeWidth="2" /><path d="M15 3v18" stroke="#474747" strokeWidth="2" /></Svg></DevIcon>
            <DevIcon><Svg s={21}><rect x="3" y="3" width="18" height="18" rx="2" fill="none" stroke="#474747" strokeWidth="2" /><path d="M3 15h18" stroke="#474747" strokeWidth="2" /><path d="M8 7h8l-4 4z" fill="#474747" /></Svg></DevIcon>
            <DevIcon><MdClose size={20} /></DevIcon>
            <DevIcon $w={7} />
          </DevBar>
          <DrawerBody>
            <NewsHead>
              <Svg s={40} v="0 0 40 40">
                <circle cx="20" cy="20" r="20" fill="#1a73e8" />
                <circle cx="20" cy="20" r="15.500" fill="none" stroke="#fff" strokeWidth="2" />
                <circle cx="20" cy="20" r="7.500" fill="none" stroke="#fff" strokeWidth="2" />
                <path d="M20 12.500h14M13.500 24L6.500 12M26.500 24L19.500 35.500" stroke="#fff" strokeWidth="2" />
              </Svg>
              What's new in DevTools 151
            </NewsHead>
            <SeeAll>See all new features</SeeAll>
            <DrawerScroll><UpTri /><DrawerThumb /><span style={{ flex: 1 }} /><DownTri style={{ marginBottom: 6 }} /></DrawerScroll>
          </DrawerBody>
        </Dev>
      </Split>
    </Screen>
  );
}
